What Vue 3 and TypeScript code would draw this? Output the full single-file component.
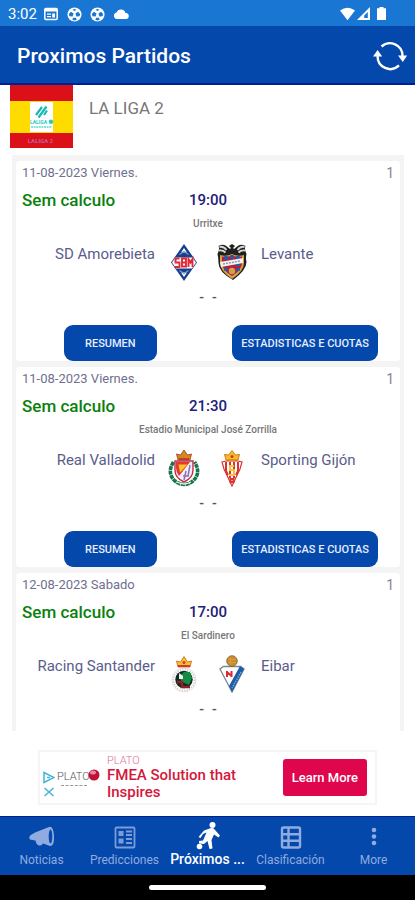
<script setup lang="ts">
import { ref } from 'vue'

type CrestId = 'amorebieta' | 'levante' | 'valladolid' | 'sporting' | 'racing' | 'eibar'

interface Match {
  date: string
  round: number
  time: string
  venue: string
  home: string
  homeCrest: CrestId
  away: string
  awayCrest: CrestId
}

const matches: Match[] = [
  { date: '11-08-2023 Viernes.', round: 1, time: '19:00', venue: 'Urritxe', home: 'SD Amorebieta', homeCrest: 'amorebieta', away: 'Levante', awayCrest: 'levante' },
  { date: '11-08-2023 Viernes.', round: 1, time: '21:30', venue: 'Estadio Municipal José Zorrilla', home: 'Real Valladolid', homeCrest: 'valladolid', away: 'Sporting Gijón', awayCrest: 'sporting' },
  { date: '12-08-2023 Sabado', round: 1, time: '17:00', venue: 'El Sardinero', home: 'Racing Santander', homeCrest: 'racing', away: 'Eibar', awayCrest: 'eibar' },
]

const tabs = [
  { id: 'news', label: 'Noticias' },
  { id: 'tips', label: 'Predicciones' },
  { id: 'next', label: 'Próximos ...' },
  { id: 'table', label: 'Clasificación' },
  { id: 'more', label: 'More' },
]

const activeTab = ref('next')
</script>

<template>
  <div class="screen">
    <div class="status">
      <span class="clock">3:02</span>
      <svg class="s-icon" viewBox="0 0 16 16"><rect x="1.8" y="2.4" width="12.4" height="11" rx="1" fill="none" stroke="#fff" stroke-width="1.5" /><path d="M2 3h12v2.6H2zM4 7.5h4v1.3H4zM4 10h4v1.3H4zM9.2 7.5H12v4H9.2z" fill="#fff" /></svg>
      <svg v-for="n in 2" :key="n" class="s-icon ball" viewBox="0 0 16 16"><circle cx="8" cy="8" r="7.500" fill="#fff" /><path d="M8 4.200 5.800 2.800 8 2l2.200.8zM4.200 5l2.800 1.800-1 3.200-3.400-.2L2 7.500zM11.800 5 9 6.800l1 3.200 3.400-.2.6-2.300zM6.500 11.500h3l.8 2-2.300 1-2.300-1z" fill="#1976d2" /></svg>
      <svg class="s-icon cloud" viewBox="0 0 16 16"><path d="M4 13a3.300 3.300 0 0 1-.5-6.500A4.800 4.800 0 0 1 12.500 7 3 3 0 0 1 13 13z" fill="#fff" /></svg>
      <span class="spacer"></span>
      <svg class="s-signal" viewBox="0 0 48 16"><path d="M1 4.500Q8.500-1 16 4.500L8.500 14.300z" fill="#fff" /><path d="M31 1v13H18z" fill="#fff" /><path d="M28.800 6v6h-3.600V9.500z" fill="#1976d2" /><path d="M38 2.200h2.500V1h4v1.200H47V14h-9z" fill="#fff" /></svg>
    </div>

    <header class="bar">
      <h1>Proximos Partidos</h1>
      <button class="refresh" type="button" aria-label="Actualizar">
        <svg viewBox="0 0 34 34" width="34" height="34"><g fill="none" stroke="#fff" stroke-width="2.400"><path d="M8.500 7.500A12.600 12.600 0 0 1 29.500 17" /><path d="M26 26.400A12.600 12.600 0 0 1 4.600 17" /></g><path d="M25 16.500h9.200L29.800 23zM0 17.500h9.200L4.600 11z" fill="#fff" /></svg>
      </button>
    </header>

    <main class="content">
      <div class="league">
        <svg class="flag" viewBox="0 0 63 63">
          <path d="M0 0h63v63H0z" fill="#dc1018" /><path d="M0 16h63v32H0z" fill="#ffdc00" /><path d="M20 17h23v30H20z" fill="#fff" />
          <path d="M26 30l6-8M28.500 32.500l8-11M34 30l3-4.500" stroke="#18b9b2" stroke-width="2.200" fill="none" />
          <text x="20" y="39" class="flag-logo">LALIGA</text><circle cx="41" cy="36.800" r="2.200" fill="#2cc9c1" /><path d="M21 42h21" stroke="#5bdad2" stroke-width="1.300" stroke-dasharray="2 .6" />
          <text x="30.500" y="57.500" class="flag-name">LALIGA 2</text>
        </svg>
        <h2>LA LIGA 2</h2>
      </div>

      <section class="list">
        <article v-for="m in matches" :key="m.home" class="card">
          <div class="meta"><span>{{ m.date }}</span><span class="round">{{ m.round }}</span></div>
          <div class="when"><strong>Sem calculo</strong><time>{{ m.time }}</time></div>
          <p class="venue">{{ m.venue }}</p>
          <div class="teams">
            <span class="home">{{ m.home }}</span>
            <svg v-for="c in [m.homeCrest, m.awayCrest]" :key="c" class="crest" viewBox="0 0 36 38">
              <g v-if="c === 'amorebieta'">
                <path d="M18 1 31 19.500 18 38 5 19.500z" fill="#173f8c" />
                <path d="M18 5 21 9.500h-6zM18 34l3-4.500h-6z" fill="#fff" /><path d="M13.500 11.500 18 8.500l4.500 3M13.500 27.500l4.500 3 4.500-3" stroke="#7c98cc" stroke-width="1.200" fill="none" />
                <path d="M9.500 14.500h17l3.500 5-4 6h-16l-4-6z" fill="#fff" />
                <path d="M13.500 15.500H9.500v4h4v4.500H8.500M16 24.500v-9h4v8h-4M16 19.500h4M22.500 24v-8l2 3.500 2-3.500v8" stroke="#df2934" stroke-width="1.900" fill="none" />
              </g>
              <g v-else-if="c === 'levante'">
                <path d="M3.500 11Q6 6 4.500 3q5-3 9 1L16 6l1-1-2-2 3-2 3 2-2 2 1 1 2.500-2q4-4 9-1-1.500 3 1 8-1 4 0 8 0 8-13.500 18Q4.500 29 4.500 20q0-5-1-9z" fill="#20201f" />
                <path d="M5.500 4q4-1 7 3M5 7.500q4-.5 6.500 2M30.500 4q-4-1-7 3M31 7.500q-4-.5-6.500 2" stroke="#d9d9d7" stroke-width="1.900" fill="none" />
                <path d="M6 12q6 2 12-1 6 3 12 1v8q0 8-12 16Q6 28 6 20z" fill="#d0a34b" />
                <path d="M8 13.500q5 1 10-1 5 2 10 1V20q0 7-10 13Q8 27 8 20z" fill="#b51f3e" />
                <path d="M12 13v15M18 12v7M24 13v15" stroke="#235da8" stroke-width="3.400" stroke-dasharray="4 2" />
                <path d="m6 19 23-4v5L7 24z" fill="#f3f3ed" /><path d="m9 21 17-3" stroke="#7f92b8" stroke-width="1.400" stroke-dasharray="2 1" /><circle cx="18" cy="28" r="3.200" fill="#d0a04a" />
              </g>
              <g v-else-if="c === 'valladolid'">
                <path d="M7.500 13q-7 11 1.500 19 9 7 18 0Q35.500 24 28.500 13" fill="none" stroke="#19734b" stroke-width="3.600" stroke-dasharray="4 .6" />
                <path d="M11 33q7 4 14 0" fill="none" stroke="#e9f3ec" stroke-width="1.300" />
                <path d="M9 12h18v9q0 8-9 12-9-4-9-12z" fill="#f6effa" stroke="#bc3042" stroke-width="1.400" />
                <path d="M10 13h14L13 27q-3-4-3-8z" fill="#e6382d" /><path d="M12.500 15.500h9l-7.500 8z" fill="#f5c72e" /><path d="M24 16l-2 11M20 22l-2 9M17 27h6" stroke="#8a70b4" stroke-width="1.500" />
                <path d="m12 11-1.500-6 4 1L18 1l3.500 5 4-1L24 11z" fill="#d2891c" stroke="#9f3b24" stroke-width=".8" /><path d="M13 10h10" stroke="#cc2332" stroke-width="1.500" />
              </g>
              <g v-else-if="c === 'sporting'">
                <path d="m8 13 4-1h12l4 1-2 7-8 17-8-17z" fill="#fff" stroke="#d53335" stroke-width="1.200" />
                <path d="M12 13v9l2 4M16 13v16M20 13v16M24 13v9l-2 4M16.500 30h3v3h-3z" stroke="#db3430" stroke-width="2" fill="none" />
                <path d="M20 17h-4v4h4v5h-5" fill="none" stroke="#f2c33a" stroke-width="2" />
                <path d="M12 11 10.500 5.500l4 .500L18 1.500 21.500 6l4-.5L24 11z" fill="#f4bd28" stroke="#d36e17" stroke-width=".9" /><path d="M12 11.500h12" stroke="#e4842a" stroke-width="1.500" /><circle cx="18" cy="7.500" r="1.500" fill="#cf342b" />
              </g>
              <g v-else-if="c === 'racing'">
                <circle cx="18" cy="25" r="12" fill="#fff" stroke="#d8d8d4" stroke-width=".8" /><circle cx="18" cy="25" r="10.500" fill="none" stroke="#c4c5bd" stroke-width="1.600" stroke-dasharray="1 1.500" />
                <circle cx="18" cy="24.500" r="8.700" fill="#142920" /><path d="m13 22 5-5h6l2 6-3 7-7-3z" fill="#148b45" /><path d="M13 18v6h4v-3z" fill="#eef2f1" /><path d="M11 27h5v5h8" stroke="#8e2224" stroke-width="2.500" fill="none" />
                <path d="M12 12 10.500 6l4 1L18 1.500 21.500 7l4-1L24 12z" fill="#f4c32a" stroke="#d36c28" stroke-width=".9" /><path d="M12 11h12" stroke="#d23934" stroke-width="2" /><circle cx="18" cy="7.500" r="1.500" fill="#d23934" />
              </g>
              <g v-else>
                <path d="M9.500 11.500h17l3.500 2.500-12 23L6 14z" fill="#fff" stroke="#7b8392" stroke-width="1.300" /><path d="m26 11 4 3-12 23-3-6z" fill="#1b5ea9" /><path d="m27 17-9 16" stroke="#83acd4" stroke-width="1.300" stroke-dasharray="1.500 1" />
                <path d="M13 16v6M17.500 16v6M13 17l4.500 4" stroke="#e02b2d" stroke-width="2" />
                <circle cx="18" cy="6" r="5.300" fill="#c88c2e" stroke="#86602b" stroke-width=".8" /><path d="M14 4.500h8M14 7.500h8M16.500 2v8" stroke="#dba544" stroke-width=".7" />
              </g>
            </svg>
            <span>{{ m.away }}</span>
          </div>
          <p class="score"><span>-</span><span>-</span></p>
          <div class="actions">
            <button type="button">RESUMEN</button>
            <button type="button">ESTADISTICAS E CUOTAS</button>
          </div>
        </article>
      </section>
    </main>

    <aside class="ad">
      <div class="ad-marks">
        <svg viewBox="0 0 12 26" width="12" height="26" fill="none" stroke="#45b4d2" stroke-width="1.500"><path d="M1 1.500v10L11 6.500zM4 6.500h3M1.500 17l9 8M10.500 17l-9 8" /></svg>
      </div>
      <div class="ad-logo">
        <span>PLATO</span>
        <svg viewBox="0 0 12 12" width="12" height="12"><circle cx="6" cy="6" r="5.500" fill="#bf1238" /><ellipse cx="5" cy="3.500" rx="3" ry="2" fill="#e88798" /></svg>
        <i></i>
      </div>
      <div class="ad-text"><small>PLATO</small><b>FMEA Solution that Inspires</b></div>
      <a class="cta" href="#">Learn More</a>
    </aside>

    <nav class="tabs">
      <button v-for="t in tabs" :key="t.id" type="button" :class="{ active: activeTab === t.id }" @click="activeTab = t.id">
        <svg viewBox="0 0 28 28" fill="currentColor">
          <g v-if="t.id === 'news'"><path d="M7 9.500 21 4q4-1.500 5 8 .5 12-4 11L7 17.500l-5-1Q.5 15 2 12.500z" /><path d="M7.500 17.500h8q0 5-4 5-3 0-4-5z" /><ellipse cx="22.500" cy="13.500" rx="1.800" ry="7" fill="#0748ad" /></g>
          <g v-else-if="t.id === 'tips'" opacity=".85"><rect x="4.500" y="4.500" width="19" height="20" rx="1" fill="none" stroke="currentColor" stroke-width="1.800" /><path d="M7.500 8h5v5h-5zM7.500 15.500h5v5h-5zM15 7.500h6v2h-6zM15 11h6v2h-6zM15 15h6v2h-6zM15 19h6v2h-6z" /></g>
          <g v-else-if="t.id === 'next'"><circle cx="18.500" cy="3" r="3" /><circle cx="5.500" cy="24.500" r="2.800" /><path d="M10 8.500 17 6q3-.5 4 2l5 5.500-1.500 2L20 12.500l-2.500 5.500 1 8.500-3 .5-2-8-3.500 3-5-.5v-2.500l4-.5 3.500-8-3.500 1.500-2.500 4-2-1z" /></g>
          <g v-else-if="t.id === 'table'"><rect x="5" y="4.500" width="18" height="20" rx="1.500" fill="none" stroke="currentColor" stroke-width="2.400" /><path d="M11.500 4v21M5 11.200h18M5 17.800h18" stroke="currentColor" stroke-width="2.400" /></g>
          <g v-else><circle cx="14" cy="7" r="2.300" /><circle cx="14" cy="13.500" r="2.300" /><circle cx="14" cy="20" r="2.300" /></g>
        </svg>
        <span>{{ t.label }}</span>
      </button>
    </nav>
    <div class="gesture"><i></i></div>
  </div>
</template>

<style>
body { background: #fff; }
</style>

<style scoped>
* { box-sizing: border-box; margin: 0; }
.screen { display: flex; flex-direction: column; height: 100vh; font-family: Roboto, "Liberation Sans", sans-serif; overflow: hidden; }
button { border: 0; font-family: inherit; cursor: pointer; }

.status { flex: none; display: flex; align-items: center; height: 26px; padding: 2px 28px 0 8px; background: #1976d2; color: #fff; }
.clock { font-size: 15px; margin-right: 6px; }
.s-icon { width: 16px; height: 16px; margin-right: 8px; }
.ball { width: 15px; height: 15px; }
.spacer { flex: 1; }
.s-signal { width: 48px; height: 16px; }

.bar { flex: none; display: flex; align-items: center; justify-content: space-between; height: 59px; padding: 2px 8px 0 17px; background: #0448ac; border-bottom: 2px solid #021f94; }
.bar h1 { color: #fff; font-size: 21px; font-weight: 500; line-height: 28px; }
.refresh { display: flex; padding: 0; background: none; }

.content { flex: 1; min-height: 0; display: flex; flex-direction: column; }
.league { flex: none; display: flex; gap: 16px; height: 70px; padding-left: 10px; }
.flag { width: 63px; height: 63px; }
.flag-logo { font-size: 5px; font-weight: 700; fill: #2cc9c1; }
.flag-name { font-size: 6px; font-weight: 700; text-anchor: middle; fill: #c0609c; }
.league h2 { padding-top: 11px; color: #777; font-size: 17px; font-weight: 400; line-height: 24px; }

.list { flex: 1; min-height: 0; overflow: hidden; display: flex; flex-direction: column; gap: 6px; margin: 0 11px 0 12px; padding: 6px 4px; background: #f4f4f4; }
.card { flex: none; padding: 0 6px; background: #fff; border-radius: 4px; color: #5b5c8c; }
.meta { display: flex; justify-content: space-between; font-size: 13px; line-height: 24px; color: #6f7090; }
.round { font-size: 14px; color: #85858f; }
.when { display: grid; grid-template-columns: 1fr auto 1fr; align-items: center; height: 30px; }
.when strong { color: #0a800c; font-size: 17px; font-weight: 500; }
.when time { color: #20207a; font-size: 15px; font-weight: 500; }
.venue { text-align: center; font-size: 10px; font-weight: 500; line-height: 18px; color: #777; }
.teams { display: grid; grid-template-columns: 1fr 38px 38px 1fr; column-gap: 10px; padding-top: 10px; font-size: 15px; line-height: 22px; }
.home { text-align: right; }
.crest { width: 38px; height: 38px; }
.score { display: flex; justify-content: center; gap: 8px; height: 44px; padding-top: 6px; font-size: 14px; font-weight: 500; line-height: 20px; color: #555; }
.actions { display: flex; justify-content: space-between; padding: 0 16px 0 42px; }
.actions button { height: 36px; padding: 0 9px; border-radius: 9px; background: #0448ac; color: #e6edff; font-size: 11px; font-weight: 500; }
.actions button:first-child { padding: 0 21px; }

.ad { flex: none; display: flex; align-items: center; height: 55px; margin: 19px 38px 11px; padding: 0 8px 0 3px; border: 2px solid #f5f5f5; }
.ad-marks { width: 14px; padding-top: 16px; }
.ad-logo { flex: none; display: flex; flex-wrap: wrap; align-content: center; width: 50px; color: #555; }
.ad-logo span { font-size: 11px; line-height: 16px; font-weight: 300; }
.ad-logo svg { margin-left: -2px; }
.ad-logo i { width: 26px; margin-left: 4px; border-top: 1px dashed #999; }
.ad-text { flex: 1; display: flex; flex-direction: column; color: #d4173c; }
.ad-text small { font-size: 11px; line-height: 13px; font-weight: 300; color: #e36f92; }
.ad-text b { font-size: 15px; font-weight: 500; line-height: 17px; }
.cta { flex: none; padding: 0 9px; border-radius: 3px; background: #df064d; color: #fff; font-size: 13px; font-weight: 500; line-height: 37px; text-decoration: none; }

.tabs { flex: none; display: grid; grid-template-columns: repeat(5, minmax(0, 1fr)); height: 59px; background: #0448ac; border-top: 1px solid #021f94; }
.tabs button { display: flex; flex-direction: column; align-items: center; padding: 6px 1px 0; background: none; color: #8fabdf; font-size: 12px; line-height: 18px; }
.tabs svg { width: 28px; height: 28px; }
.tabs span { white-space: nowrap; }
.tabs .active { padding-top: 5px; color: #fff; font-size: 14px; font-weight: 500; }
.gesture { flex: none; display: flex; justify-content: center; height: 25px; padding-top: 10px; background: #000; }
.gesture i { width: 28%; height: 5px; border-radius: 3px; background: #fff; }
</style>
